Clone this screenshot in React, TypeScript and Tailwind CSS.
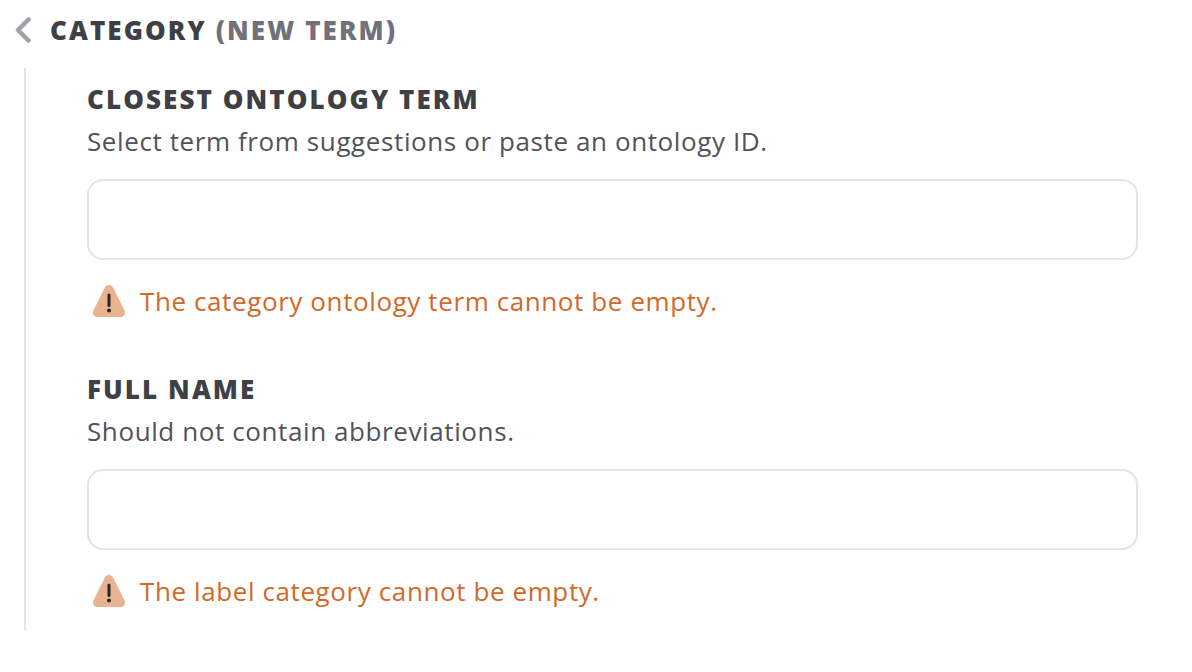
function WarnIcon() {
  return (
    <svg width="34" height="34" viewBox="0 0 34 34" className="shrink-0">
      <path
        d="M17 1C15 1 13.6 2.2 12.6 4L1.6 26C0 29.2 1.6 33 5.2 33H28.8C32.4 33 34 29.2 32.4 26L21.4 4C20.4 2.2 19 1 17 1Z"
        fill="#e9b391"
      />
      <path d="M17 11V21.5" stroke="#27272a" strokeWidth="3" strokeLinecap="round" />
      <circle cx="17" cy="26.5" r="2" fill="#27272a" />
    </svg>
  );
}

function Field({ title, hint, error }: { title: string; hint: string; error: string }) {
  return (
    <div>
      <div className="text-[26px] leading-[34px] font-extrabold tracking-[0.08em] text-[#3f3f46]">{title}</div>
      <div className="text-[26px] leading-[36px] mt-[7px] tracking-[0.6px] text-[#52525b]">{hint}</div>
      <div className="mt-[20px] h-[81px] rounded-[16px] border-2 border-[#e4e4e7] bg-white" />
      <div className="mt-[23px] ml-[5px] flex items-center gap-[14px] text-[#d0692a] text-[26px] leading-[36px] tracking-[0.6px]">
        <WarnIcon />
        <span>{error}</span>
      </div>
    </div>
  );
}

export default function App() {
  return (
    <div className="w-[1192px] h-[672px] bg-white font-['Open_Sans',sans-serif] overflow-hidden">
      <div className="flex items-center h-[36px] mt-[12px] pl-[15px]">
        <svg width="16" height="26" viewBox="0 0 16 26" className="shrink-0">
          <path d="M13.5 2.5L3 13L13.5 23.5" fill="none" stroke="#a1a1aa" strokeWidth="4.5" strokeLinecap="round" strokeLinejoin="round" />
        </svg>
        <div className="ml-[19px] text-[26px] leading-[36px] font-extrabold tracking-[0.08em] text-[#3f3f46]">
          CATEGORY <span className="text-[#71717a]">(NEW TERM)</span>
        </div>
      </div>
      <div className="mt-[20px] ml-[24px] w-[1114px] h-[562px] border-l-2 border-[#e4e4e7] pl-[61px] pt-[14px] flex flex-col gap-[52.5px]">
        <Field
          title="CLOSEST ONTOLOGY TERM"
          hint="Select term from suggestions or paste an ontology ID."
          error="The category ontology term cannot be empty."
        />
        <Field
          title="FULL NAME"
          hint="Should not contain abbreviations."
          error="The label category cannot be empty."
        />
      </div>
    </div>
  );
}
